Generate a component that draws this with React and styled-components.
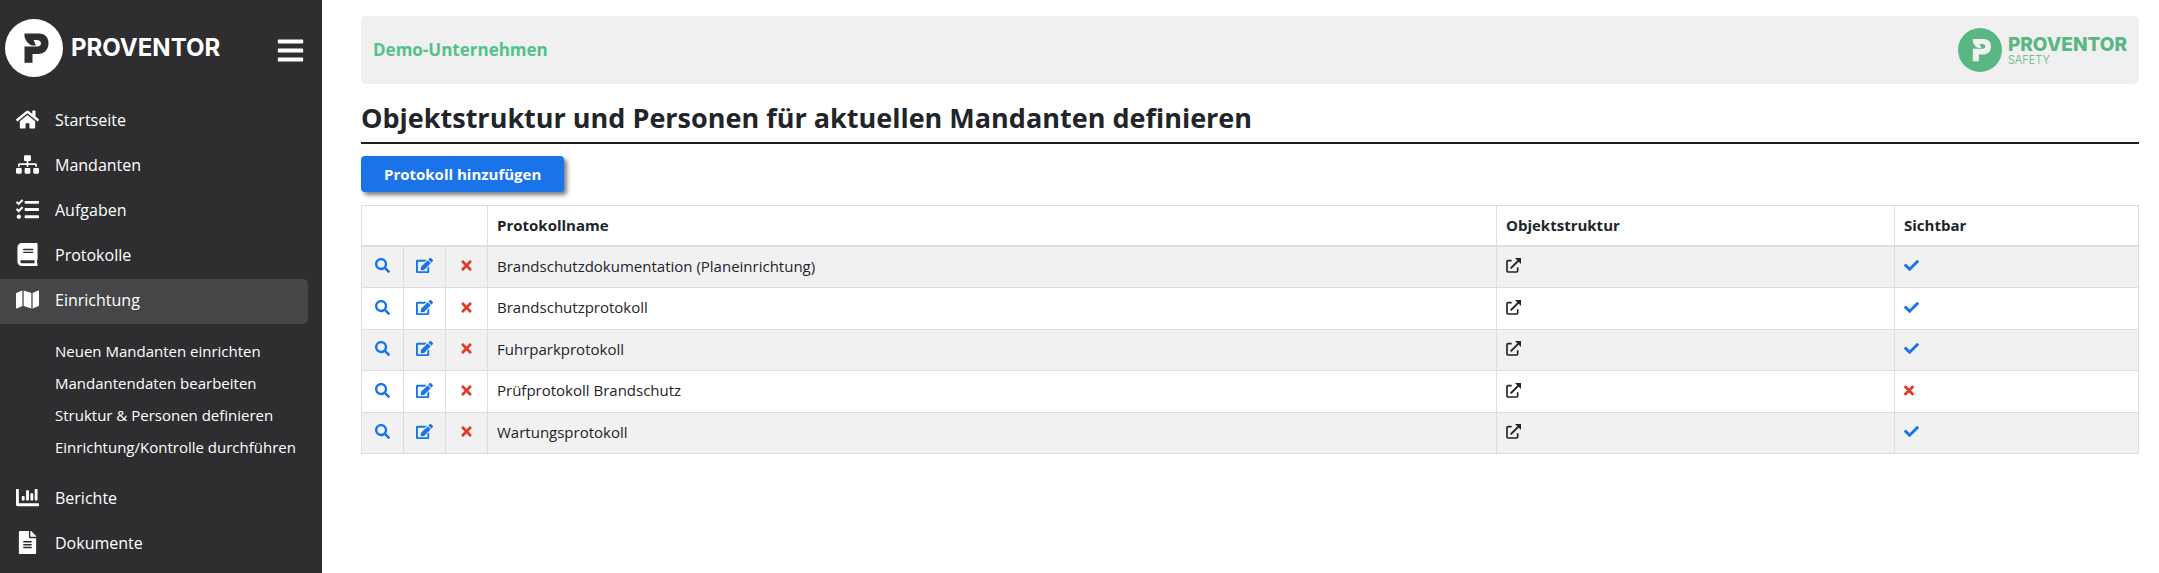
import React from "react";
import styled, { createGlobalStyle } from "styled-components";
import {
  FaBars,
  FaBook,
  FaChartBar,
  FaCheck,
  FaEdit,
  FaFileAlt,
  FaHome,
  FaMap,
  FaSearch,
  FaSitemap,
  FaTasks,
  FaTimes,
} from "react-icons/fa";

const theme = {
  dark: "#2e2e30",
  active: "#464648",
  blue: "#1a73e8",
  red: "#e03a2a",
  green: "#50c38b",
  logoGreen: "#5ab783",
  text: "#212529",
  line: "#dddddd",
  stripe: "#f1f1f1",
  banner: "#f0f0f0",
};

const setupLinks = [
  "Neuen Mandanten einrichten",
  "Mandantendaten bearbeiten",
  "Struktur & Personen definieren",
  "Einrichtung/Kontrolle durchführen",
];

const navItems = [
  { label: "Startseite", icon: FaHome },
  { label: "Mandanten", icon: FaSitemap },
  { label: "Aufgaben", icon: FaTasks },
  { label: "Protokolle", icon: FaBook },
  { label: "Einrichtung", icon: FaMap, active: true, children: setupLinks },
  { label: "Berichte", icon: FaChartBar },
  { label: "Dokumente", icon: FaFileAlt },
];

const protocols = [
  { name: "Brandschutzdokumentation (Planeinrichtung)", visible: true },
  { name: "Brandschutzprotokoll", visible: true },
  { name: "Fuhrparkprotokoll", visible: true },
  { name: "Prüfprotokoll Brandschutz", visible: false },
  { name: "Wartungsprotokoll", visible: true },
];

function LogoMark({ size, color, cutout }) {
  return (
    <svg width={size} height={size} viewBox="0 0 58 58" aria-hidden="true">
      <circle cx="29" cy="29" r="29" fill={color} />
      <path
        d="M19.5 14.5H34C40 14.5 43.5 18.5 43.5 24C43.5 31 39 35 33 35H27.5V43.7H19.5V27.5H32C35 27.5 36 26 36 24.5C36 22 34 21 31.5 21H28.5L31 26.5H27.5C24 26 20.5 22 19.5 17.5Z"
        fill={cutout}
      />
    </svg>
  );
}

function OpenIcon() {
  return (
    <svg width="15" height="15" viewBox="0 0 45 45" aria-hidden="true">
      <path
        d="M17 8H6Q3 8 3 11V39Q3 42 6 42H32Q35 42 35 39V28"
        fill="none"
        stroke="currentColor"
        strokeWidth="5"
      />
      <path d="M14 31L38 7" stroke="currentColor" strokeWidth="6" />
      <path d="M27 0H45V18Z" fill="currentColor" />
    </svg>
  );
}

export default function App() {
  return (
    <Page>
      <GlobalStyle />
      <Sidebar>
        <SidebarHeader>
          <Brand href="#">
            <LogoMark size={58} color="#fff" cutout={theme.dark} />
            <BrandName>PROVENTOR</BrandName>
          </Brand>
          <MenuButton type="button" aria-label="Menü">
            <FaBars />
          </MenuButton>
        </SidebarHeader>
        <nav>
          {navItems.map(({ label, icon: Icon, active, children }) => (
            <React.Fragment key={label}>
              <NavLink href="#" $active={active}>
                <Icon />
                {label}
              </NavLink>
              {children && (
                <SubMenu>
                  {children.map((child) => (
                    <SubLink href="#" key={child}>
                      {child}
                    </SubLink>
                  ))}
                </SubMenu>
              )}
            </React.Fragment>
          ))}
        </nav>
      </Sidebar>
      <Main>
        <Banner>
          <Company>Demo-Unternehmen</Company>
          <SafetyLogo>
            <LogoMark size={44} color={theme.logoGreen} cutout={theme.banner} />
            <div>
              <div className="name">PROVENTOR</div>
              <div className="product">SAFETY</div>
            </div>
          </SafetyLogo>
        </Banner>
        <Title>Objektstruktur und Personen für aktuellen Mandanten definieren</Title>
        <AddButton type="button">Protokoll hinzufügen</AddButton>
        <Table>
          <colgroup>
            <col className="action" />
            <col className="action" />
            <col className="action" />
            <col />
            <col className="structure" />
            <col className="visible" />
          </colgroup>
          <thead>
            <tr>
              <th colSpan={3} aria-label="Aktionen" />
              <th>Protokollname</th>
              <th>Objektstruktur</th>
              <th>Sichtbar</th>
            </tr>
          </thead>
          <tbody>
            {protocols.map(({ name, visible }) => (
              <tr key={name}>
                <td>
                  <IconButton type="button" aria-label="Anzeigen">
                    <FaSearch />
                  </IconButton>
                </td>
                <td>
                  <IconButton type="button" aria-label="Bearbeiten">
                    <FaEdit size={17} />
                  </IconButton>
                </td>
                <td>
                  <IconButton type="button" aria-label="Löschen" $color={theme.red}>
                    <FaTimes />
                  </IconButton>
                </td>
                <td>{name}</td>
                <td>
                  <IconLink href="#" aria-label="Objektstruktur öffnen">
                    <OpenIcon />
                  </IconLink>
                </td>
                <td>
                  <Status $visible={visible}>
                    {visible ? <FaCheck /> : <FaTimes />}
                  </Status>
                </td>
              </tr>
            ))}
          </tbody>
        </Table>
      </Main>
    </Page>
  );
}

const GlobalStyle = createGlobalStyle`
  * {
    box-sizing: border-box;
  }
  body {
    margin: 0;
    color: ${theme.text};
    font-family: "Open Sans", sans-serif;
    font-size: 15px;
    line-height: 1.5;
  }
  a {
    text-decoration: none;
  }
  button {
    padding: 0;
    border: none;
    background: none;
    font-family: inherit;
    cursor: pointer;
  }
`;

const Page = styled.div`
  display: flex;
  min-height: 100vh;
`;

const Sidebar = styled.aside`
  flex: 0 0 322px;
  background-color: ${theme.dark};
`;

const SidebarHeader = styled.div`
  display: flex;
  align-items: center;
  justify-content: space-between;
  padding: 19px 17px 22px 5px;
`;

const Brand = styled.a`
  display: flex;
  align-items: center;
  gap: 8px;
  color: #fff;
`;

const BrandName = styled.span`
  font-family: Inter, sans-serif;
  font-size: 24px;
  font-weight: 700;
`;

const MenuButton = styled.button`
  display: flex;
  padding-top: 4px;
  color: #fff;
  font-size: 29px;
`;

const NavLink = styled.a`
  display: flex;
  align-items: center;
  gap: 16px;
  height: 45px;
  margin-right: 14px;
  padding: 0 0 4px 16px;
  border-radius: 0 5px 5px 0;
  background-color: ${(props) => (props.$active ? theme.active : "transparent")};
  color: #fff;
  font-size: 16px;

  svg {
    width: 23px;
    height: 23px;
  }
`;

const SubMenu = styled.div`
  display: flex;
  flex-direction: column;
  padding: 11px 0 14px 55px;
`;

const SubLink = styled.a`
  color: #fff;
  font-size: 15px;
  line-height: 32px;
`;

const Main = styled.main`
  flex: 1;
  min-width: 0;
  padding: 16px 20px 16px 39px;
`;

const Banner = styled.header`
  display: flex;
  align-items: center;
  justify-content: space-between;
  height: 68px;
  padding: 0 12px;
  border-radius: 5px;
  background-color: ${theme.banner};
`;

const Company = styled.div`
  color: ${theme.green};
  font-size: 17px;
  font-weight: 700;
`;

const SafetyLogo = styled.div`
  display: flex;
  align-items: center;
  gap: 6px;
  color: ${theme.logoGreen};
  font-family: Inter, sans-serif;

  .name {
    font-size: 19px;
    font-weight: 800;
    line-height: 19px;
  }
  .product {
    font-size: 11px;
    font-weight: 300;
    line-height: 12px;
  }
`;

const Title = styled.h1`
  margin: 14px 0 12px;
  padding-bottom: 4px;
  border-bottom: 2px solid #1c1c1e;
  font-size: 27px;
  font-weight: 700;
  line-height: 40px;
`;

const AddButton = styled.button`
  display: block;
  margin-bottom: 13px;
  padding: 0 23px;
  border-radius: 4px;
  background-color: ${theme.blue};
  box-shadow: 3px 3px 4px rgba(33, 37, 41, 0.6);
  color: #fff;
  font-size: 15px;
  font-weight: 700;
  line-height: 36px;
`;

const Table = styled.table`
  width: 100%;
  border-collapse: collapse;
  table-layout: fixed;

  .action {
    width: 42px;
  }
  .structure {
    width: 398px;
  }
  .visible {
    width: 244px;
  }
  th,
  td {
    padding: 8px 9px 10px;
    border: 1px solid ${theme.line};
    text-align: left;
  }
  th {
    padding: 8px 9px;
    border-bottom-width: 2px;
    font-weight: 700;
  }
  tbody tr:nth-child(odd) {
    background-color: ${theme.stripe};
  }
`;

const IconButton = styled.button`
  display: flex;
  align-items: center;
  justify-content: center;
  width: 100%;
  height: 22px;
  color: ${(props) => props.$color || theme.blue};
  font-size: 15px;
`;

const IconLink = styled.a`
  display: flex;
  align-items: center;
  width: 15px;
  height: 22px;
  color: ${theme.text};
`;

const Status = styled.span`
  display: flex;
  align-items: center;
  height: 22px;
  color: ${(props) => (props.$visible ? theme.blue : theme.red)};
  font-size: 15px;

  svg {
    width: ${(props) => (props.$visible ? "15px" : "10px")};
  }
`;
